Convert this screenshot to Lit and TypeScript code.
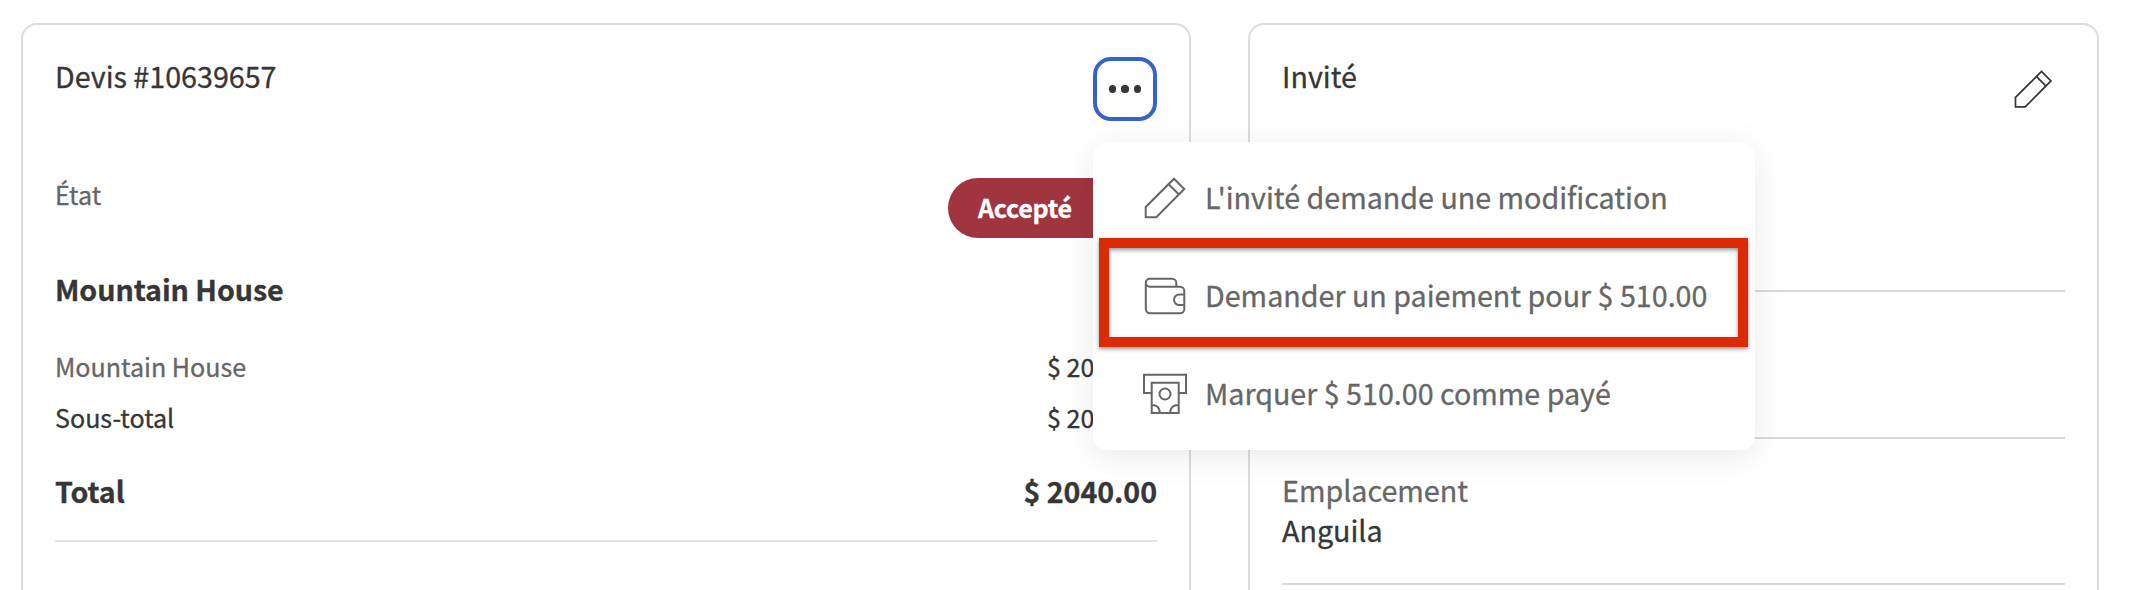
import { LitElement, html, svg, css } from "lit";
import { customElement } from "lit/decorators.js";

const pencil = svg`<path d="M31 2.7 41.3 13 13.3 41.3H2.7V31Z M25.7 8.3 35.7 18.3"/>`;
const wallet = svg`<path d="M2.8 7V33a4.3 4.3 0 0 0 4.3 4.3H37a4.3 4.3 0 0 0 4.3-4.3V15A4.3 4.3 0 0 0 37 10.7H6.8A4 4 0 0 1 2.8 6.7A4 4 0 0 1 6.8 2.7H29a4.3 4.3 0 0 1 4.3 4.3V10.7 M41.3 18.4H36.3a5.3 5.3 0 0 0 0 10.6H41.3"/>`;
const cash = svg`<path d="M8.7 21H1V2.7H43V21H35.7 M8.7 10.7H35.7V41H8.7Z M8.7 33C13.2 32.6 17 35.5 16.7 41 M35.7 33C31 32.6 27 35.5 27.2 41"/><circle cx="22" cy="22" r="5.5"/>`;

@customElement("app-root")
export class AppRoot extends LitElement {
  static styles = css`
    :host { display: block; height: 590px; overflow: hidden; background: #fff; color: #363636;
      font-family: "Noto Sans CJK SC", "Noto Sans", sans-serif; font-size: 28.66px; line-height: 38px;
      -webkit-text-stroke: 0.3px currentColor; }
    * { box-sizing: border-box; }
    .page { position: relative; display: grid; grid-template-columns: 1170px 851px; column-gap: 57px;
      padding: 23px 0 0 21px; height: 640px; white-space: nowrap; }
    .card { border: 2px solid #dcdcdc; border-radius: 16px; padding: 32px 32px 0; }
    .head, .row { display: flex; justify-content: space-between; align-items: flex-start; }
    .head { height: 64px; }
    .more { width: 64px; height: 64px; border: 4px solid #3662cc; border-radius: 18px; background: #fff;
      padding: 0; display: flex; align-items: center; justify-content: center; gap: 5.7px; }
    .dot { width: 7.2px; height: 7.2px; border-radius: 50%; background: #363636; }
    .small { font-size: 25.08px; line-height: 40px; }
    .muted { color: #666; }
    .bold { font-weight: 700; letter-spacing: -0.07px; }
    .state { margin-top: 53px; height: 95px; }
    .badge { margin-top: 4px; width: 209px; height: 60px; line-height: 58px; border-radius: 30px;
      background: #a0353f; color: #fff; font-weight: 700; padding-left: 30px; letter-spacing: -0.25px; }
    .house { height: 77px; padding-top: 1px; }
    .line { height: 51px; }
    .total { margin-top: 24px; height: 68px; }
    .rule { height: 2px; background: #e4e4e4; }
    .guest .rule { background: #d9d9d9; }
    .icon { display: block; width: 44px; height: 44px; fill: none; stroke: currentColor; stroke-width: 2; }
    .edit { width: 40.4px; height: 40.4px; margin: 11.8px 12px 0 0; stroke-width: 1.9; }
    .first { margin-top: 169px; }
    .second { margin-top: 145px; }
    .place { margin-top: 31px; height: 113px; line-height: 40px; }
    .menu { position: absolute; left: 1093px; top: 142px; width: 662px; height: 308px; padding: 6px 0 0 50px;
      border-radius: 14px; background: #fff; color: #666; box-shadow: 0 6px 34px rgba(0,0,0,.085); }
    .item { height: 98px; display: flex; align-items: center; gap: 18px; }
    .item .icon { margin-top: 2px; }
    .item:nth-child(2) .icon { margin-top: 6px; }
    .mark { position: absolute; left: 1099px; top: 238px; width: 649px; height: 109px;
      border: 10px solid #dc2a04; filter: drop-shadow(0 2px 2px rgba(0,0,0,.42)); }
  `;

  private item(icon: unknown, label: string) {
    return html`<div class="item"><svg class="icon" viewBox="0 0 44 44">${icon}</svg><span>${label}</span></div>`;
  }

  render() {
    return html`
      <div class="page">
        <section class="card">
          <div class="head"><span>Devis #10639657</span>
            <button class="more" aria-label="Actions"><i class="dot"></i><i class="dot"></i><i class="dot"></i></button>
          </div>
          <div class="row state small"><span class="muted">État</span><span class="badge">Accepté</span></div>
          <div class="house bold">Mountain House</div>
          <div class="row line small"><span class="muted">Mountain House</span><span>$ 2040.00</span></div>
          <div class="row line small"><span>Sous-total</span><span>$ 2040.00</span></div>
          <div class="row total bold"><span>Total</span><span>$ 2040.00</span></div>
          <div class="rule"></div>
        </section>
        <section class="card guest">
          <div class="head"><span>Invité</span>
            <svg class="icon edit" viewBox="0 0 44 44">${pencil}</svg>
          </div>
          <div class="rule first"></div>
          <div class="rule second"></div>
          <div class="place"><div class="muted">Emplacement</div><div>Anguila</div></div>
          <div class="rule"></div>
        </section>
        <nav class="menu">
          ${this.item(pencil, "L'invité demande une modification")}
          ${this.item(wallet, "Demander un paiement pour $ 510.00")}
          ${this.item(cash, "Marquer $ 510.00 comme payé")}
        </nav>
        <div class="mark"></div>
      </div>`;
  }
}
